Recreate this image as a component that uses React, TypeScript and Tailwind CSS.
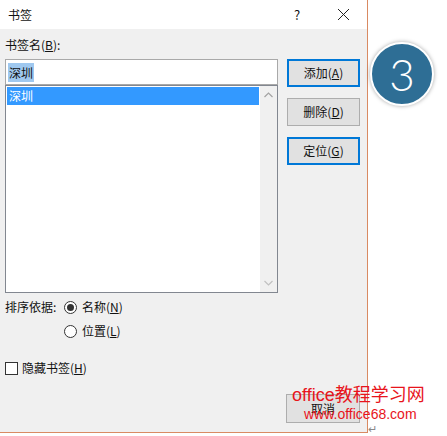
import React from 'react';

const font = { fontFamily: '"Noto Sans CJK SC", "Noto Sans", sans-serif' };

function Btn({ label, k, focused }: { label: string; k: string; focused?: boolean }) {
  return (
    <div
      className={`w-[73px] h-[28px] flex items-center justify-center bg-[#e1e1e1] text-[12px] text-[#111] ${
        focused ? 'border-2 border-[#0078d7]' : 'border border-[#adadad]'
      }`}
    >
      {label}(<span className="underline">{k}</span>)
    </div>
  );
}

export default function App() {
  return (
    <div className="w-[447px] h-[436px] bg-white flex overflow-hidden" style={font}>
      {/* dialog */}
      <div className="w-[368px] h-[433px] flex flex-col border-r border-b border-[#d98a62] shrink-0">
        {/* title bar */}
        <div className="h-[29px] bg-white flex items-center pl-[8px] text-[12px] text-[#111]">
          <span className="flex-1">书签</span>
          <span className="w-[12px] text-[13px] text-center mr-[34px]">?</span>
          <svg width="13" height="13" viewBox="0 0 13 13" className="mr-[17px]">
            <path d="M1 1 L12 12 M12 1 L1 12" stroke="#222" strokeWidth="1" />
          </svg>
        </div>

        {/* body */}
        <div className="flex-1 bg-[#f0f0f0] pl-[5px] pt-[8px] flex flex-col text-[12px] text-[#111]">
          <div className="flex">
            <div className="w-[273px] flex flex-col">
              <div className="h-[16px] leading-[16px] mb-[6px]">
                书签名(<span className="underline">B</span>):
              </div>
              <div className="h-[26px] bg-white border border-[#a9a9a9] flex items-center pl-[2px]">
                <span className="bg-[#9fc8ef] px-[1px] leading-[19px]">深圳</span>
              </div>
              <div className="h-[208px] bg-white border border-[#828790] flex">
                <div className="flex-1 p-[1px]">
                  <div className="h-[18px] bg-[#3399ff] text-white leading-[18px] pl-[2px]">深圳</div>
                </div>
                <div className="w-[17px] bg-[#f0f0f0] flex flex-col items-center justify-between py-[6px]">
                  <svg width="9" height="6" viewBox="0 0 9 6">
                    <path d="M0.5 5 L4.5 1 L8.5 5" stroke="#a3a3a3" strokeWidth="1.2" fill="none" />
                  </svg>
                  <svg width="9" height="6" viewBox="0 0 9 6">
                    <path d="M0.5 1 L4.5 5 L8.5 1" stroke="#c0c0c0" strokeWidth="1.2" fill="none" />
                  </svg>
                </div>
              </div>
            </div>
            <div className="ml-[9px] mt-[22px] flex flex-col gap-[11px]">
              <Btn label="添加" k="A" focused />
              <Btn label="删除" k="D" />
              <Btn label="定位" k="G" focused />
            </div>
          </div>

          {/* sort */}
          <div className="mt-[6px] flex">
            <span className="w-[59px] leading-[16px]">排序依据:</span>
            <div className="flex flex-col gap-[8px]">
              <div className="flex items-center h-[16px]">
                <span className="w-[13px] h-[13px] rounded-full border border-[#333] bg-white flex items-center justify-center">
                  <span className="w-[7px] h-[7px] rounded-full bg-[#333]" />
                </span>
                <span className="ml-[5px]">
                  名称(<span className="underline">N</span>)
                </span>
              </div>
              <div className="flex items-center h-[16px]">
                <span className="w-[13px] h-[13px] rounded-full border border-[#333] bg-white" />
                <span className="ml-[5px]">
                  位置(<span className="underline">L</span>)
                </span>
              </div>
            </div>
          </div>

          {/* hide bookmarks */}
          <div className="mt-[21px] flex items-center h-[16px]">
            <span className="w-[13px] h-[13px] border border-[#333] bg-white" />
            <span className="ml-[4px]">
              隐藏书签(<span className="underline">H</span>)
            </span>
          </div>

          {/* cancel */}
          <div className="mt-[18px] pl-[281px] relative">
            <div className="w-[74px] h-[29px] bg-[#e1e1e1] border border-[#adadad] flex items-center justify-center">
              取消
            </div>
            {/* watermark */}
            <div className="absolute left-[287px] top-[-10px] whitespace-nowrap text-[#e8141c] flex flex-col items-start">
              <span className="text-[18px] leading-[22px]" style={{ fontFamily: '"Liberation Sans", "Noto Sans CJK SC", sans-serif' }}>
                office教程学习网
              </span>
              <span className="ml-[12px] text-[14px] leading-[16px]" style={{ fontFamily: '"Liberation Sans", sans-serif' }}>
                www.office68.com
              </span>
            </div>
          </div>
        </div>
      </div>

      {/* right side */}
      <div className="flex-1 relative">
        <div className="ml-[2px] mt-[42px] w-[64px] h-[64px] rounded-full bg-[#2e6e95] border-2 border-white shadow-[0_0_4px_rgba(0,0,0,0.35)] flex items-center justify-center">
          <span className="text-white text-[44px] font-light leading-none" style={{ fontFamily: 'Lato, "Open Sans", sans-serif' }}>
            3
          </span>
        </div>
        <span className="absolute left-[0px] top-[420px] text-[11px] text-[#888]">↵</span>
      </div>
    </div>
  );
}
